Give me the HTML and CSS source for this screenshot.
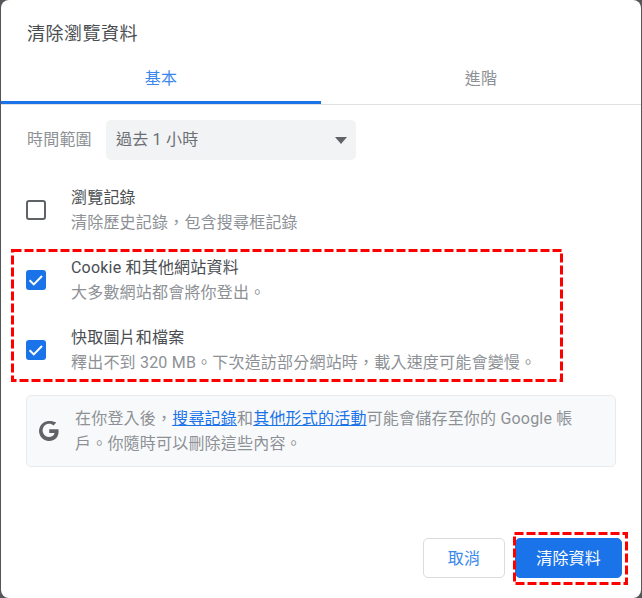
FILE: index.html
```html
<!DOCTYPE html>
<html lang="zh-Hant">
<head>
	<title>清除瀏覽資料</title>
	<link rel="stylesheet" href="styles.css">
</head>
<body>
	<div class="dialog">
		<div class="title">清除瀏覽資料</div>
		<div class="tabs">
			<div class="tab tab-active">基本</div>
			<div class="tab">進階</div>
		</div>
		<div class="range">
			<span class="range-label">時間範圍</span>
			<div class="select">
				<span class="select-text">過去 1 小時</span>
				<span class="select-arrow"></span>
			</div>
		</div>
		<div class="option">
			<div class="check"></div>
			<div>
				<div class="option-name">瀏覽記錄</div>
				<div class="option-info">清除歷史記錄，包含搜尋框記錄</div>
			</div>
		</div>
		<div class="option">
			<div class="check check-on">
				<svg width="20" height="20" viewBox="0 0 20 20"><path d="M3.600 10.200l4.200 4.200 8.200-8.400" fill="none" stroke="#fff" stroke-width="2"/></svg>
			</div>
			<div>
				<div class="option-name">Cookie 和其他網站資料</div>
				<div class="option-info">大多數網站都會將你登出。</div>
			</div>
		</div>
		<div class="option">
			<div class="check check-on">
				<svg width="20" height="20" viewBox="0 0 20 20"><path d="M3.600 10.200l4.200 4.200 8.200-8.400" fill="none" stroke="#fff" stroke-width="2"/></svg>
			</div>
			<div>
				<div class="option-name">快取圖片和檔案</div>
				<div class="option-info">釋出不到 320 MB。下次造訪部分網站時，載入速度可能會變慢。</div>
			</div>
		</div>
		<div class="notice">
			<svg class="notice-icon" width="20" height="20" viewBox="0 0 20 20"><path d="M19.6 10.2c0-.7-.1-1.400-.2-2H10.200v3.800h5.300c-.2 1.200-.9 2.300-2 3-1 .7-2.200 1.100-3.300 1.100-3 0-5.500-2-6.300-4.800-.2-.7-.3-1.300-.3-1.900s.1-1.300.3-1.900C4.700 4.700 7.200 2.700 10.200 2.700c1.700 0 3.100.6 4.300 1.700l2.800-2.800C15.500.6 13 0 10.200 0 6.300 0 2.900 2.200 1.100 5.500.4 6.900 0 8.400 0 10s.4 3.100 1.100 4.500C2.900 17.800 6.300 20 10.200 20c2.700 0 5-.9 6.600-2.400 1.800-1.700 2.800-4.200 2.800-7.400z" fill="#5f6368"/></svg>
			<div class="notice-text">在你登入後，<a href="#">搜尋記錄</a>和<a href="#">其他形式的活動</a>可能會儲存至你的 Google 帳戶。你隨時可以刪除這些內容。</div>
		</div>
		<div class="buttons">
			<div class="btn">取消</div>
			<div class="btn btn-primary">清除資料</div>
		</div>
	</div>
	<svg class="mark mark-options" width="552" height="133"><rect x="1.500" y="1.500" width="549" height="130" /></svg>
	<svg class="mark mark-button" width="115" height="53"><rect x="1.500" y="1.500" width="112" height="50" /></svg>
</body>
</html>
```

FILE: styles.css
```css
body{
	margin: 0;
	height: 598px;
	overflow: hidden;
	background: #55565a;
	font-family: Roboto, "Noto Sans CJK TC", sans-serif;
	font-size: 16px;
	letter-spacing: 0.2px;
	color: #5f6368;
}
.dialog{
	position: relative;
	width: 640px;
	height: 598px;
	margin-left: 1px;
	background: white;
	border-radius: 8px;
	display: flex;
	flex-direction: column;
}
.title{
	padding: 22px 26px 0;
	height: 27px;
	line-height: 24px;
	font-size: 18px;
	letter-spacing: 0.5px;
	color: #4a4e52;
}
.tabs{
	display: flex;
	height: 55px;
	border-bottom: 1px solid #e0e0e0;
}
.tab{
	width: 320px;
	height: 52px;
	line-height: 60px;
	text-align: center;
	color: #8d9196;
}
.tab-active{
	color: #3b87ec;
	border-bottom: 3px solid #1a73e8;
}
.range{
	display: flex;
	align-items: center;
	padding: 15px 0 0 26px;
}
.range-label{
	width: 79px;
	padding-bottom: 4px;
	color: #8d9196;
}
.select{
	width: 250px;
	height: 40px;
	padding: 0 9px 0 10px;
	box-sizing: border-box;
	display: flex;
	align-items: center;
	justify-content: space-between;
	background: #f1f3f4;
	border-radius: 5px;
}
.select-text{
	padding-bottom: 4px;
	color: #6b6f74;
}
.select-arrow{
	width: 0;
	height: 0;
	border-left: 6px solid transparent;
	border-right: 6px solid transparent;
	border-top: 7px solid #5f6368;
}
.option{
	display: flex;
	align-items: center;
	height: 50px;
	margin-top: 19px;
	padding-left: 25px;
}
.option + .option{
	margin-top: 20px;
}
.range + .option{
	margin-top: 25px;
}
.check{
	width: 20px;
	height: 20px;
	box-sizing: border-box;
	margin-right: 25px;
	border: 2px solid #5f6368;
	border-radius: 3px;
}
.check-on{
	border: 0;
	background: #1a73e8;
}
.check-on svg{
	display: block;
}
.option-name{
	line-height: 25px;
	color: #4a4e52;
}
.option-info{
	line-height: 25px;
	color: #8d9196;
}
.notice{
	display: flex;
	align-items: center;
	width: 590px;
	height: 72px;
	box-sizing: border-box;
	margin: 20px 0 0 25px;
	padding: 0 12px;
	background: #f8f9fa;
	border: 1px solid #e8eaed;
	border-radius: 5px;
}
.notice-icon{
	flex: none;
	margin-right: 16px;
}
.notice-text{
	width: 510px;
	line-height: 25px;
	color: #8d9196;
}
.notice-text a{
	color: #1a73e8;
}
.buttons{
	display: flex;
	justify-content: flex-end;
	gap: 10px;
	margin-top: 71px;
	padding-right: 19px;
}
.btn{
	padding: 0 24px;
	height: 40px;
	line-height: 40px;
	box-sizing: border-box;
	border: 1px solid #dadce0;
	border-radius: 5px;
	color: #3b87ec;
}
.btn-primary{
	padding: 0 20px;
	background: #1a73e8;
	border-color: #1a73e8;
	color: white;
}
/* red dashed annotation boxes, they sit on top of the dialog */
.mark{
	position: absolute;
	fill: none;
	stroke: #f00;
	stroke-width: 3px;
	stroke-dasharray: 9 3;
}
.mark-options{
	left: 11px;
	top: 249px;
}
.mark-button{
	left: 513px;
	top: 532px;
}
```
